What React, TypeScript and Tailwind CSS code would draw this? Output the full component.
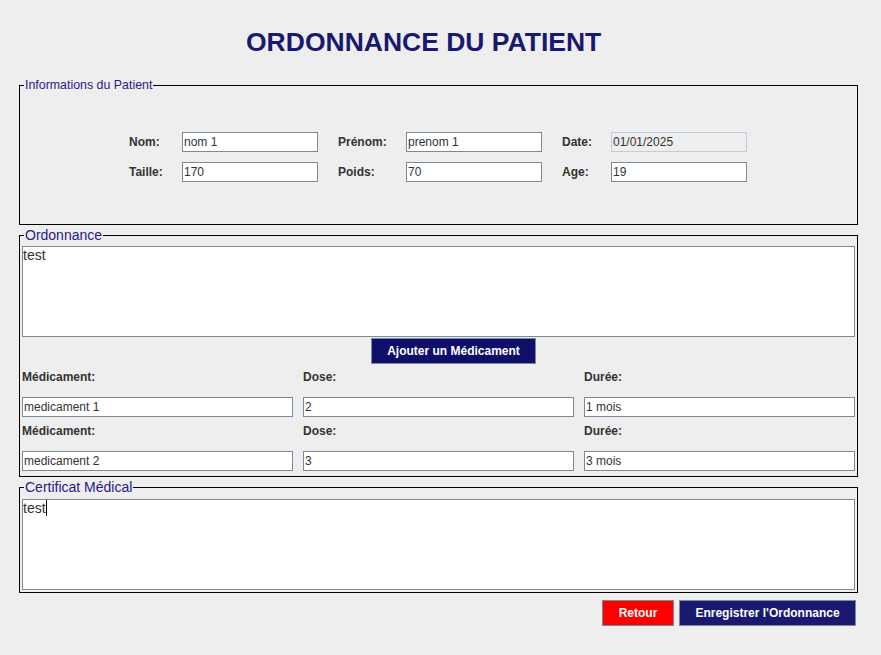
import React from 'react';

const labelCls = 'text-[12px] font-bold leading-[14px] text-[#333333]';
const fieldCls =
  'h-[20px] border border-[#7a8a99] bg-white pl-px text-[12px] text-[#333333] outline-none';
const legendCls = 'px-px text-[#2a1a8c]';

function Field({ value, w }: { value: string; w: string }) {
  return <input readOnly value={value} className={`${fieldCls} ${w}`} />;
}

function MedRow({ med, dose, duree, first }: { med: string; dose: string; duree: string; first?: boolean }) {
  return (
    <div className={first ? 'mt-[6px]' : 'mt-[7px]'}>
      <div className="grid grid-cols-3 gap-x-[10px]">
        <span className={labelCls}>Médicament:</span>
        <span className={labelCls}>Dose:</span>
        <span className={labelCls}>Durée:</span>
      </div>
      <div className="mt-[13px] grid grid-cols-3 gap-x-[10px]">
        <Field value={med} w="w-full" />
        <Field value={dose} w="w-full" />
        <Field value={duree} w="w-full" />
      </div>
    </div>
  );
}

export default function App() {
  return (
    <div className="min-h-[655px] w-[881px] bg-[#eeeeee] font-['Liberation_Sans',Arial,sans-serif]">
      {/* title */}
      <h1 className="pl-[246px] pt-[27px] text-[26.5px] font-bold leading-[30px] text-[#191970]">
        ORDONNANCE DU PATIENT
      </h1>

      {/* patient info */}
      <fieldset className="ml-[19px] mt-[21px] w-[839px] border border-black pb-[42px]">
        <legend className={`${legendCls} ml-[4px] text-[12.4px] leading-[14px]`}>Informations du Patient</legend>
        <div className="ml-[109px] mt-[40px] grid grid-cols-[53px_156px_68px_156px_49px_136px] items-center gap-y-[10px]">
          <span className={labelCls}>Nom:</span>
          <Field value="nom 1" w="w-[136px]" />
          <span className={labelCls}>Prénom:</span>
          <Field value="prenom 1" w="w-[136px]" />
          <span className={labelCls}>Date:</span>
          <input
            readOnly
            value="01/01/2025"
            className="h-[20px] w-[136px] border border-[#b8cfe5] bg-[#eeeeee] pl-px text-[12px] text-[#333333] outline-none"
          />

          <span className={labelCls}>Taille:</span>
          <Field value="170" w="w-[136px]" />
          <span className={labelCls}>Poids:</span>
          <Field value="70" w="w-[136px]" />
          <span className={labelCls}>Age:</span>
          <Field value="19" w="w-[136px]" />
        </div>
      </fieldset>

      {/* ordonnance */}
      <fieldset className="ml-[19px] mt-[2px] w-[839px] border border-black px-[2px] pb-[5px]">
        <legend className={`${legendCls} ml-[2px] text-[14px] leading-[16px]`}>Ordonnance</legend>
        <div className="mt-[3px] h-[91px] border border-[#7a8a99] bg-white text-[14px] leading-[16px] text-[#333333]">
          test
        </div>
        <div className="mt-px flex">
          <button className="ml-[349px] h-[26px] w-[165px] border border-[#7a8a99] bg-[#0f0f6b] text-[12px] font-bold text-white">
            Ajouter un Médicament
          </button>
        </div>
        <MedRow med="medicament 1" dose="2" duree="1 mois" first />
        <MedRow med="medicament 2" dose="3" duree="3 mois" />
      </fieldset>

      {/* certificat */}
      <fieldset className="ml-[19px] mt-[2px] w-[839px] border border-black px-[2px] pb-[2px]">
        <legend className={`${legendCls} ml-[2px] text-[14px] leading-[16px]`}>Certificat Médical</legend>
        <div className="mt-[4px] h-[91px] border border-[#7a8a99] bg-white text-[14px] leading-[16px] text-[#333333]">
          test
          <span className="inline-block h-[16px] w-px bg-black align-top" />
        </div>
      </fieldset>

      {/* actions */}
      <div className="ml-[19px] mt-[7px] flex w-[839px] justify-end gap-[5px] pr-[2px]">
        <button className="h-[26px] w-[72px] border border-[#7a8a99] bg-[#ff0000] text-[12px] font-bold text-white">
          Retour
        </button>
        <button className="h-[26px] w-[177px] border border-[#7a8a99] bg-[#191970] text-[12px] font-bold text-white">
          Enregistrer l'Ordonnance
        </button>
      </div>
    </div>
  );
}
